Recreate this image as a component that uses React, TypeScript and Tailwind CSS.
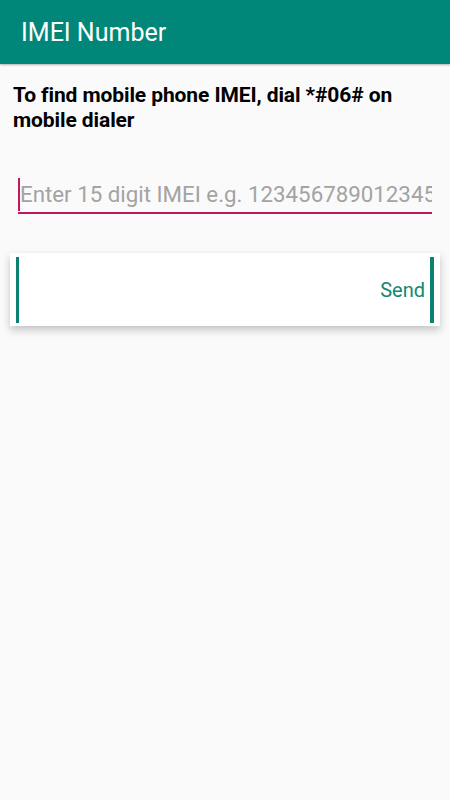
export default function App() {
  return (
    <div className="min-h-[800px] bg-[#fafafa] font-['Roboto',sans-serif]">
      {/* App bar */}
      <header className="h-16 bg-[#01877a] flex items-center px-[21px] shadow-[0_1px_2px_rgba(0,0,0,0.3)]">
        <h1 className="text-[25px] text-white leading-none">IMEI Number</h1>
      </header>

      <main className="px-[13px] pt-[19px]">
        <p className="text-[21px] font-bold leading-[25px] text-black tracking-[-0.1px]">
          To find mobile phone IMEI, dial *#06# on mobile dialer
        </p>

        {/* IMEI input */}
        <div className="mt-[43px] ml-[5px] mr-[5px] border-b-2 border-[#c2185b] flex items-center h-[38px] overflow-hidden">
          <span className="w-[2px] h-[33px] bg-[#c2185b] shrink-0" />
          <span className="text-[22.3px] text-[#a3a3a3] whitespace-nowrap leading-none">
            Enter 15 digit IMEI e.g. 123456789012345
          </span>
        </div>

        {/* Send card */}
        <div className="mt-[39px] -mx-[3px] h-[73px] bg-white shadow-[0_4px_8px_rgba(0,0,0,0.22)] flex items-center justify-end px-[6px]">
          <span className="w-[3px] h-[66px] bg-[#0c8071] mr-auto" />
          <span className="text-[20px] text-[#13876f] mr-[5px]">Send</span>
          <span className="w-[4px] h-[66px] bg-[#0c8071]" />
        </div>
      </main>
    </div>
  );
}
